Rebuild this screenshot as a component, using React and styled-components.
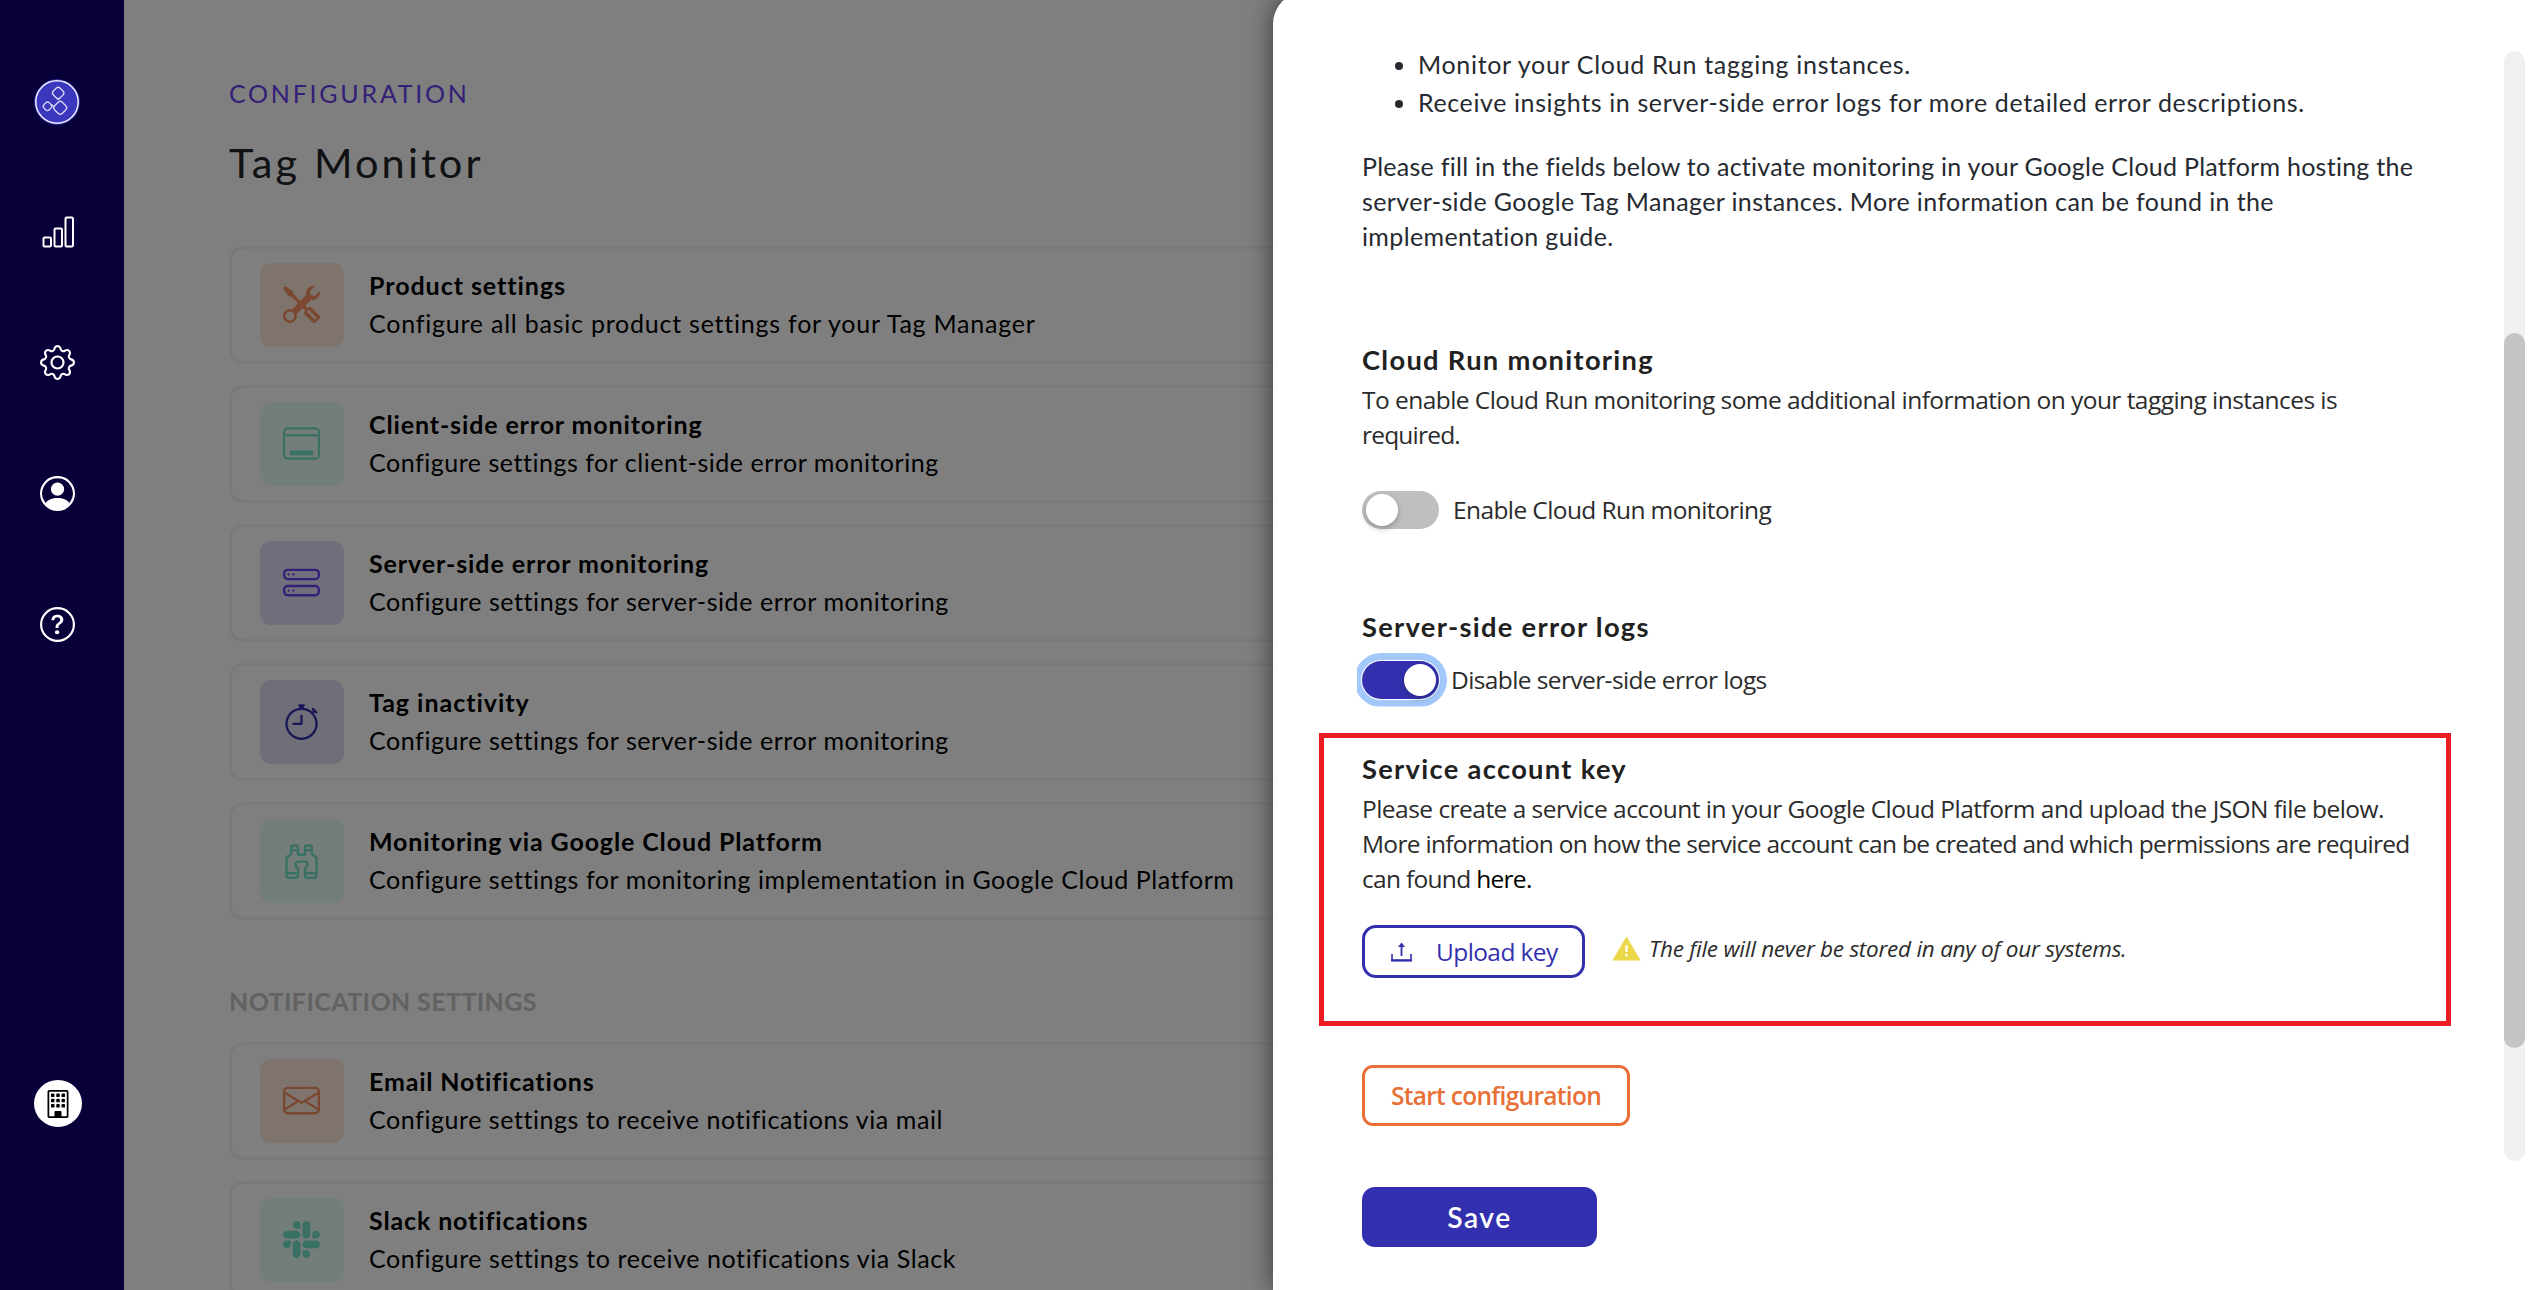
import React from "react";
import styled, { createGlobalStyle, css } from "styled-components";
import {
  BsGear,
  BsPersonCircle,
  BsQuestionCircle,
  BsBuilding,
  BsTools,
  BsHddStack,
  BsStopwatch,
  BsBinoculars,
  BsEnvelope,
  BsSlack,
} from "react-icons/bs";

const brandFont = 'Lato, "Liberation Sans", sans-serif';
const bodyFont = '"Open Sans", "Noto Sans", sans-serif';

const GlobalStyle = createGlobalStyle`
  *, *::before, *::after { box-sizing: border-box; }
  body { margin: 0; font-family: ${brandFont}; overflow: hidden; }
  h1, h2, h3, p, ul { margin: 0; padding: 0; font-weight: inherit; font-size: inherit; }
  button { font: inherit; margin: 0; }
  svg { display: block; }
`;

const Shell = styled.div`
  position: relative;
  display: grid;
  grid-template-columns: 124px 1fr;
  height: 1290px;
  overflow: hidden;
  background: #fff;
`;

/* Sidebar */

const SidebarArea = styled.div`
  display: flex;
  background: #080038;
`;

const Sidebar = styled.nav`
  display: flex;
  flex-direction: column;
  width: 115px;
  padding: 36px 0 163px;
`;

const NavItem = styled.a`
  display: flex;
  align-items: center;
  justify-content: center;
  height: ${(p) => (p.$brand ? 130 : 131)}px;
  padding: ${(p) => (p.$brand ? "2px 1px 0 0" : 0)};
  color: #fff;
`;

const OrgBadge = styled.div`
  display: flex;
  align-items: center;
  justify-content: center;
  width: 48px;
  height: 47px;
  margin: auto 0 0 34px;
  border-radius: 50%;
  background: #fff;
  color: #000;
`;

/* Configuration page */

const Main = styled.main`
  min-width: 0;
  height: 1290px;
  overflow: hidden;
  padding: 78px 60px 0 105px;
`;

const Eyebrow = styled.p`
  font-size: 25px;
  line-height: 30px;
  letter-spacing: 2.75px;
  color: #6840f0;
`;

const PageTitle = styled.h1`
  margin-top: 29px;
  font-size: 41.5px;
  font-weight: 400;
  line-height: 50px;
  letter-spacing: 3.1px;
  color: #212529;
`;

const CardList = styled.div`
  display: flex;
  flex-direction: column;
  gap: 21px;
  margin-top: ${(p) => p.$top}px;
`;

const Card = styled.article`
  display: flex;
  gap: 25px;
  height: 118px;
  padding: 14px 28px;
  border: 3px solid #f3f3f3;
  border-radius: 14px;
`;

const tones = {
  orange: { fg: "#f59162", bg: "#fce6db" },
  green: { fg: "#72e0c9", bg: "#e6faf3" },
  violet: { fg: "#6840f0", bg: "#e4defa" },
  navy: { fg: "#3330af", bg: "#e0dff2" },
};

const IconTile = styled.div`
  display: flex;
  flex: none;
  align-items: center;
  justify-content: center;
  width: 84px;
  height: 84px;
  padding: 0 1px 2px 0;
  border-radius: 11px;
  color: ${(p) => tones[p.$tone].fg};
  background: ${(p) => tones[p.$tone].bg};
`;

const CardText = styled.div`
  padding-top: 3px;
  font-size: 25px;
  line-height: 38px;
  color: #000;
  white-space: nowrap;
`;

const CardTitle = styled.h3`
  font-weight: 700;
  letter-spacing: ${(p) => p.$track}px;
`;

const CardInfo = styled.p`
  letter-spacing: ${(p) => p.$track}px;
`;

const GroupLabel = styled.h2`
  margin-top: 66px;
  font-size: 25px;
  font-weight: 700;
  line-height: 30px;
  letter-spacing: 0.4px;
  color: #c4c4c4;
`;

const Backdrop = styled.div`
  position: absolute;
  inset: 0 0 0 124px;
  background: rgba(0, 0, 0, 0.5);
`;

/* Drawer */

const Drawer = styled.aside`
  position: absolute;
  top: -8px;
  right: 0;
  bottom: 0;
  display: flex;
  justify-content: space-between;
  width: 1273px;
  padding: 0 21px 0 46px;
  border-top-left-radius: 32px;
  background: #fff;
  box-shadow: 0 0 26px rgba(0, 0, 0, 0.55);
`;

const DrawerBody = styled.div`
  display: flex;
  flex-direction: column;
  width: 1132px;
  padding-top: 53px;
`;

const Section = styled.section`
  padding: 0 42px 0 43px;
  margin-top: ${(p) => p.$top || 0}px;
`;

const Bullets = styled.ul`
  padding-left: 56px;
  font-size: 25px;
  line-height: 38px;
  color: #262a30;
`;

const Copy = styled.p`
  font-family: ${(p) => (p.$brand ? brandFont : bodyFont)};
  font-size: ${(p) => (p.$brand ? 25 : 24.5)}px;
  line-height: 35.2px;
  color: ${(p) => (p.$brand ? "#262a30" : "#2b2b2b")};
  margin-top: ${(p) => p.$top || 0}px;
`;

const Line = styled.span`
  display: block;
  white-space: nowrap;
  letter-spacing: ${(p) => p.$track}px;
`;

const Heading = styled.h2`
  font-size: 27.3px;
  font-weight: 700;
  line-height: 40px;
  letter-spacing: 1.3px;
  color: #212121;
`;

const GuideLink = styled.a`
  color: #000;
`;

const ToggleRow = styled.label`
  display: flex;
  align-items: center;
  gap: ${(p) => p.$gap}px;
  margin-top: ${(p) => p.$top}px;
  height: 38px;
  font-family: ${bodyFont};
  font-size: 24.5px;
  letter-spacing: -0.6px;
  color: #2b2b2b;
`;

const Switch = styled.span`
  display: flex;
  align-items: center;
  justify-content: ${(p) => (p.$on ? "flex-end" : "flex-start")};
  width: 77px;
  height: 38px;
  padding: 0 3.5px;
  border-radius: 19px;
  background: ${(p) => (p.$on ? "#3330af" : "#bfbfbf")};
  ${(p) =>
    p.$on &&
    css`
      box-shadow: 0 0 0 1px #fff, 0 0 0 8px #a2c8fc;
      clip-path: inset(-8px -8px -8px -5px);
    `}
`;

const Knob = styled.span`
  width: 32px;
  height: 32px;
  border-radius: 50%;
  background: #fff;
  box-shadow: 0 3px 6px rgba(0, 35, 11, 0.25);
`;

const KeyBox = styled.section`
  height: 293px;
  margin-top: 34px;
  padding: 11px 37px 0 38px;
  border: 5px solid #ed1c24;
`;

const UploadRow = styled.div`
  display: flex;
  align-items: center;
  margin-top: 29px;
`;

const UploadButton = styled.button`
  display: flex;
  align-items: center;
  gap: 24px;
  width: 223px;
  height: 53px;
  padding: 0 0 0 26px;
  border: 3px solid #3330af;
  border-radius: 14px;
  background: #fff;
  font-family: ${bodyFont};
  font-size: 24.5px;
  letter-spacing: -0.6px;
  color: #3330af;
  white-space: nowrap;
`;

const Note = styled.p`
  display: flex;
  align-items: center;
  gap: 8px;
  margin: 0 0 7px 27px;
  font-family: ${bodyFont};
  font-size: 22.5px;
  font-style: italic;
  letter-spacing: -0.25px;
  color: #2b2b2b;
  white-space: nowrap;
`;

const StartButton = styled.button`
  display: block;
  width: 268px;
  height: 61px;
  padding: 0;
  border: 3px solid #e86f36;
  border-radius: 11px;
  background: #fff;
  font-family: ${bodyFont};
  font-size: 24.5px;
  font-weight: 600;
  letter-spacing: -0.7px;
  color: #e86f36;
`;

const SaveButton = styled.button`
  display: block;
  width: 235px;
  height: 60px;
  margin-top: 61px;
  padding: 0;
  border: 0;
  border-radius: 13px;
  background: #3330af;
  font-size: 28.2px;
  font-weight: 600;
  letter-spacing: 1.5px;
  color: #fff;
`;

const ScrollTrack = styled.div`
  width: 21px;
  height: 1110px;
  margin-top: 59px;
  padding-top: 282px;
  border-radius: 11px;
  background: #f0f0f0;
`;

const ScrollThumb = styled.div`
  height: 715px;
  border-radius: 11px;
  background: #c4c4c4;
`;

/* Drawings */

const Logo = () => (
  <svg width="46" height="46" viewBox="0 0 46 46" fill="none">
    <circle cx="23" cy="23" r="22.7" fill="#3b38bd" />
    <circle cx="23" cy="23" r="21.2" stroke="#eeeefc" strokeWidth="1.5" />
    <g stroke="#d9d8f7" strokeWidth="1.3">
      <rect x="19.4" y="9.2" width="9.6" height="9.6" rx="2.8" transform="rotate(45 24.2 14)" />
      <rect x="20.8" y="23.4" width="10.8" height="10.8" rx="3" transform="rotate(45 26.2 28.8)" />
      <rect x="9.8" y="23.6" width="7.4" height="7.4" rx="2.6" transform="rotate(45 13.5 27.3)" />
      <path d="M17.6 25.4l2.2 2.4M22.9 20.2l2.6 0" />
    </g>
  </svg>
);

const BarsIcon = () => (
  <svg width="32" height="32" viewBox="0 0 32 32" fill="none" stroke="#fff" strokeWidth="2">
    <rect x="1.5" y="21.5" width="7.5" height="9" rx="1.2" />
    <rect x="12.5" y="12.5" width="7.5" height="18" rx="1.2" />
    <rect x="23.5" y="1.5" width="7.5" height="29" rx="1.2" />
  </svg>
);

const WindowIcon = ({ size }) => (
  <svg width={size} height={size} viewBox="0 0 16 16" fill="none" stroke="currentColor">
    <rect x=".45" y="1.45" width="15.1" height="13.1" rx="1.6" strokeWidth=".9" />
    <path d="M.5 4.5h15" strokeWidth=".9" />
    <rect x="3" y="11" width="10" height="2.1" rx=".3" fill="currentColor" stroke="none" />
  </svg>
);

const UploadIcon = () => (
  <svg width="21" height="20" viewBox="0 0 21 20" fill="none" stroke="#3330af">
    <path d="M10.5 14V3" strokeWidth="1.8" />
    <path d="M7 5l3.5-4.6L14 5z" fill="#3330af" stroke="none" />
    <path d="M1 12v7M20 12v7" strokeWidth="1.6" />
    <path d="M.2 18.4h20.6" strokeWidth="2.4" />
  </svg>
);

const WarningIcon = () => (
  <svg width="29" height="25" viewBox="0 0 29 25">
    <path d="M14.5.5L28.7 24.5H.3z" fill="#ecd64a" />
    <path d="M13.4 9.3h2.2v6.6h-2.2zM13.4 18h2.2v2.6h-2.2z" fill="#fff" />
  </svg>
);

const monitors = [
  { tone: "orange", Icon: BsTools, title: "Product settings", tt: 0.95, info: "Configure all basic product settings for your Tag Manager", it: 0.77 },
  { tone: "green", Icon: WindowIcon, title: "Client-side error monitoring", tt: 0.87, info: "Configure settings for client-side error monitoring", it: 0.52 },
  { tone: "violet", Icon: BsHddStack, title: "Server-side error monitoring", tt: 0.9, info: "Configure settings for server-side error monitoring", it: 0.57 },
  { tone: "navy", Icon: BsStopwatch, title: "Tag inactivity", tt: 0.97, info: "Configure settings for server-side error monitoring", it: 0.57 },
  { tone: "green", Icon: BsBinoculars, title: "Monitoring via Google Cloud Platform", tt: 0.88, info: "Configure settings for monitoring implementation in Google Cloud Platform", it: 0.56 },
];

const notifications = [
  { tone: "orange", Icon: BsEnvelope, title: "Email Notifications", tt: 0.82, info: "Configure settings to receive notifications via mail", it: 0.56 },
  { tone: "green", Icon: BsSlack, title: "Slack notifications", tt: 0.87, info: "Configure settings to receive notifications via Slack", it: 0.58 },
];

const Cards = ({ items, top }) => (
  <CardList $top={top}>
    {items.map(({ tone, Icon, title, tt, info, it }) => (
      <Card key={title}>
        <IconTile $tone={tone}>
          <Icon size={37} />
        </IconTile>
        <CardText>
          <CardTitle $track={tt}>{title}</CardTitle>
          <CardInfo $track={it}>{info}</CardInfo>
        </CardText>
      </Card>
    ))}
  </CardList>
);

export default function App() {
  return (
    <Shell>
      <GlobalStyle />
      <SidebarArea>
        <Sidebar>
          <NavItem $brand>
            <Logo />
          </NavItem>
          <NavItem>
            <BarsIcon />
          </NavItem>
          <NavItem>
            <BsGear size={35} />
          </NavItem>
          <NavItem>
            <BsPersonCircle size={35} />
          </NavItem>
          <NavItem>
            <BsQuestionCircle size={35} />
          </NavItem>
          <OrgBadge>
            <BsBuilding size={28} />
          </OrgBadge>
        </Sidebar>
      </SidebarArea>

      <Main>
        <Eyebrow>CONFIGURATION</Eyebrow>
        <PageTitle>Tag Monitor</PageTitle>
        <Cards items={monitors} top={59} />
        <GroupLabel>NOTIFICATION SETTINGS</GroupLabel>
        <Cards items={notifications} top={26} />
      </Main>

      <Backdrop />

      <Drawer>
        <DrawerBody>
          <Section>
            <Bullets>
              <li><Line $track={0.68}>Monitor your Cloud Run tagging instances.</Line></li>
              <li><Line $track={0.61}>Receive insights in server-side error logs for more detailed error descriptions.</Line></li>
            </Bullets>
            <Copy $brand $top={28}>
              <Line $track={0.26}>Please fill in the fields below to activate monitoring in your Google Cloud Platform hosting the</Line>
              <Line $track={0.38}>server-side Google Tag Manager instances. More information can be found in the</Line>
              <Line $track={0.36}>implementation guide.</Line>
            </Copy>
          </Section>

          <Section $top={85}>
            <Heading>Cloud Run monitoring</Heading>
            <Copy $top={2.5}>
              <Line $track={-0.55}>To enable Cloud Run monitoring some additional information on your tagging instances is</Line>
              <Line $track={-0.8}>required.</Line>
            </Copy>
            <ToggleRow $gap={14} $top={38}>
              <Switch><Knob /></Switch>
              Enable Cloud Run monitoring
            </ToggleRow>
          </Section>

          <Section $top={78}>
            <Heading>Server-side error logs</Heading>
            <ToggleRow $gap={12} $top={14}>
              <Switch $on><Knob /></Switch>
              Disable server-side error logs
            </ToggleRow>
          </Section>

          <KeyBox>
            <Heading>Service account key</Heading>
            <Copy $top={2}>
              <Line $track={-0.53}>Please create a service account in your Google Cloud Platform and upload the JSON file below.</Line>
              <Line $track={-0.69}>More information on how the service account can be created and which permissions are required</Line>
              <Line $track={-0.7}>can found <GuideLink>here.</GuideLink></Line>
            </Copy>
            <UploadRow>
              <UploadButton>
                <UploadIcon />
                Upload key
              </UploadButton>
              <Note>
                <WarningIcon />
                The file will never be stored in any of our systems.
              </Note>
            </UploadRow>
          </KeyBox>

          <Section $top={39}>
            <StartButton>Start configuration</StartButton>
            <SaveButton>Save</SaveButton>
          </Section>
        </DrawerBody>
        <ScrollTrack>
          <ScrollThumb />
        </ScrollTrack>
      </Drawer>
    </Shell>
  );
}
